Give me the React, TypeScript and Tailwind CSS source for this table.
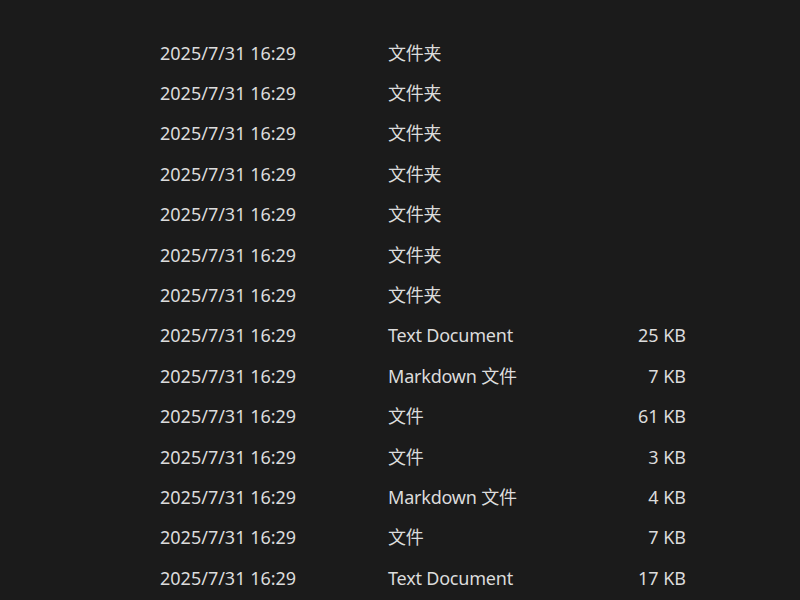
const rows: [string, string][] = [
  ["文件夹", ""],
  ["文件夹", ""],
  ["文件夹", ""],
  ["文件夹", ""],
  ["文件夹", ""],
  ["文件夹", ""],
  ["文件夹", ""],
  ["Text Document", "25 KB"],
  ["Markdown 文件", "7 KB"],
  ["文件", "61 KB"],
  ["文件", "3 KB"],
  ["Markdown 文件", "4 KB"],
  ["文件", "7 KB"],
  ["Text Document", "17 KB"],
];

export default function App() {
  return (
    <div
      className="w-[800px] h-[600px] overflow-hidden bg-[#1b1b1b] text-[#dcdcdc] pt-[33px]"
      style={{ fontFamily: '"Noto Sans", "Noto Sans CJK SC", sans-serif' }}
    >
      {rows.map(([type, size], i) => (
        <div key={i} className="flex items-center h-[40.4px] text-[18px]">
          <div className="w-[228px] pl-[160px] box-content whitespace-nowrap">2025/7/31 16:29</div>
          <div className="w-[200px] whitespace-nowrap tracking-[-0.2px]">{type}</div>
          <div className="w-[98px] text-right whitespace-nowrap">{size}</div>
        </div>
      ))}
    </div>
  );
}
